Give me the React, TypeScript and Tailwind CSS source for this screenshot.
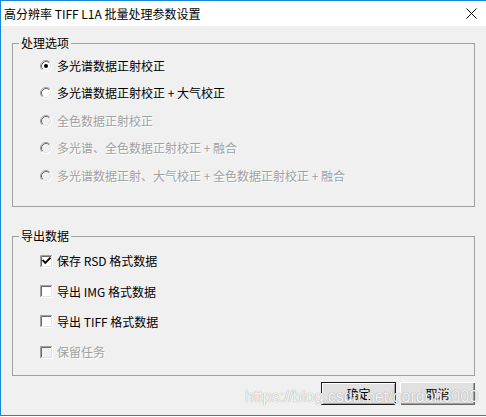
import React from "react";

const FONT = { fontFamily: '"Noto Sans CJK SC", "Liberation Sans", sans-serif' } as React.CSSProperties;

function Radio({ checked, disabled }: { checked?: boolean; disabled?: boolean }) {
  return (
    <svg width="12" height="12" viewBox="0 0 12 12" className="shrink-0">
      <circle cx="6" cy="6" r="4" fill={disabled ? "#f0f0f0" : "#ffffff"} />
      <path d="M2.11 9.89 A5.5 5.5 0 0 1 9.89 2.11" fill="none" stroke="#a0a0a0" strokeWidth="1" />
      <path d="M9.89 2.11 A5.5 5.5 0 0 1 2.11 9.89" fill="none" stroke="#ffffff" strokeWidth="1" />
      <path d="M2.82 9.18 A4.5 4.5 0 0 1 9.18 2.82" fill="none" stroke="#696969" strokeWidth="1" />
      <path d="M9.18 2.82 A4.5 4.5 0 0 1 2.82 9.18" fill="none" stroke="#e3e3e3" strokeWidth="1" />
      {checked && <circle cx="6" cy="6" r="2" fill="#000000" />}
    </svg>
  );
}

function Check({ checked, disabled }: { checked?: boolean; disabled?: boolean }) {
  return (
    <svg width="13" height="13" viewBox="0 0 13 13" className="shrink-0">
      <rect x="2" y="2" width="9" height="9" fill={disabled ? "#f0f0f0" : "#ffffff"} />
      <path d="M0.5 12 V0.5 H12" fill="none" stroke="#a0a0a0" />
      <path d="M0.5 12.5 H12.5 V0" fill="none" stroke="#ffffff" />
      <path d="M1.5 11 V1.5 H11" fill="none" stroke="#696969" />
      <path d="M1.5 11.5 H11.5 V1" fill="none" stroke="#e3e3e3" />
      {checked && (
        <path d="M3.2 5.6 L5.3 7.8 L9.8 3.3" fill="none" stroke="#000000" strokeWidth="1.9" strokeLinecap="square" />
      )}
    </svg>
  );
}

const disabledText = "text-[#a0a0a0] [text-shadow:1px_1px_0_#ffffff]";

function RadioRow({ label, checked, disabled }: { label: string; checked?: boolean; disabled?: boolean }) {
  return (
    <div className="flex h-[27.5px] items-center pl-[27px]">
      <Radio checked={checked} disabled={disabled} />
      <span className={`ml-[5px] text-[12px] leading-[16px] whitespace-nowrap ${disabled ? disabledText : "text-black"}`}>{label}</span>
    </div>
  );
}

function CheckRow({ label, checked, disabled }: { label: string; checked?: boolean; disabled?: boolean }) {
  return (
    <div className="flex h-[30.4px] items-center pl-[27px]">
      <Check checked={checked} disabled={disabled} />
      <span className={`ml-[4px] text-[12px] leading-[16px] whitespace-nowrap ${disabled ? disabledText : "text-black"}`}>{label}</span>
    </div>
  );
}

export default function App() {
  return (
    <div className="w-[486px] h-[417px] bg-white" style={FONT}>
      <div className="relative w-[486px] h-[416px] border-t border-l border-b border-[#1a86d9] flex flex-col bg-[#f0f0f0]">
        <div className="h-[25px] bg-white flex items-center justify-between pl-[3px] pr-[9px] shrink-0">
          <span className="text-[12px] text-black leading-[16px]">高分辨率 TIFF L1A 批量处理参数设置</span>
          <svg width="11" height="11" viewBox="0 0 11 11">
            <path d="M0.5 0.5 L10.5 10.5 M10.5 0.5 L0.5 10.5" stroke="#000" strokeWidth="1" />
          </svg>
        </div>
        <div className="flex flex-col pt-[9px]">
          <fieldset className="ml-[11px] mr-[11px] h-[172px] border border-[#a0a0a0]">
            <legend className="ml-[6px] px-[2px] text-[12px] leading-[16px] text-black">处理选项</legend>
            <div className="flex flex-col pt-[1px]">
              <RadioRow label="多光谱数据正射校正" checked />
              <RadioRow label="多光谱数据正射校正 + 大气校正" />
              <RadioRow label="全色数据正射校正" disabled />
              <RadioRow label="多光谱、全色数据正射校正 + 融合" disabled />
              <RadioRow label="多光谱数据正射、大气校正 + 全色数据正射校正 + 融合" disabled />
            </div>
          </fieldset>
          <fieldset className="ml-[11px] mr-[11px] mt-[21px] h-[148px] border border-[#a0a0a0]">
            <legend className="ml-[6px] px-[2px] text-[12px] leading-[16px] text-black">导出数据</legend>
            <div className="flex flex-col pt-[2px]">
              <CheckRow label="保存 RSD 格式数据" checked />
              <CheckRow label="导出 IMG 格式数据" />
              <CheckRow label="导出 TIFF 格式数据" />
              <CheckRow label="保留任务" disabled />
            </div>
          </fieldset>
          <div className="flex justify-end gap-[4px] mr-[11px] mt-[6px]">
            <button className="w-[75px] h-[23px] border border-[#1a1a1a] bg-[#e1e1e1] shadow-[inset_1px_1px_0_#ffffff,inset_-1px_-1px_0_#a0a0a0] text-[12px] leading-[16px] text-black">确定</button>
            <button className="w-[75px] h-[23px] bg-[#e1e1e1] shadow-[inset_1px_1px_0_#ffffff,inset_-1px_-1px_0_#696969,inset_-2px_-2px_0_#a0a0a0] text-[12px] leading-[16px] text-black">取消</button>
          </div>
        </div>
        <div
          className="absolute left-[244px] top-[386px] text-[16px] leading-[20px] text-[#f6f6f6] [text-shadow:0_0_1px_rgba(0,0,0,0.45)] whitespace-nowrap pointer-events-none"
          style={{ fontFamily: '"Liberation Sans", Arial, sans-serif' }}
        >
          https://blog.csdn.net/gordon3000
        </div>
      </div>
    </div>
  );
}
